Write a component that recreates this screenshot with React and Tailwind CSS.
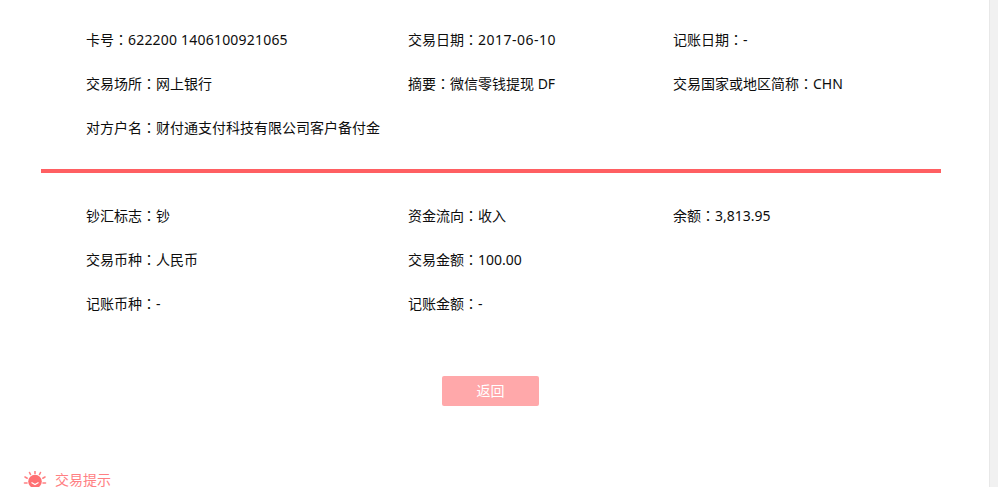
import React from "react";

const topRows = [
  [["卡号", "622200 1406100921065", "tracking-[0.2px]"], ["交易日期", "2017-06-10", "tracking-[0.5px]"], ["记账日期", "-"]],
  [["交易场所", "网上银行"], ["摘要", "微信零钱提现 DF"], ["交易国家或地区简称", "CHN"]],
  [["对方户名", "财付通支付科技有限公司客户备付金"]],
];

const bottomRows = [
  [["钞汇标志", "钞"], ["资金流向", "收入"], ["余额", "3,813.95"]],
  [["交易币种", "人民币"], ["交易金额", "100.00"]],
  [["记账币种", "-"], ["记账金额", "-"]],
];

function Field({ label, value, valueClass }) {
  return (
    <div className="whitespace-nowrap">
      {label}
      <span className="font-['Noto_Sans_CJK_TC']">：</span>
      <span className={valueClass}>{value}</span>
    </div>
  );
}

function InfoBlock({ rows }) {
  return (
    <div className="pl-[86px]">
      {rows.map((row, i) => (
        <div key={i} className="grid h-[44px] grid-cols-[322px_265px_1fr] items-center">
          {row.map(([label, value, valueClass]) => (
            <Field key={label} label={label} value={value} valueClass={valueClass} />
          ))}
        </div>
      ))}
    </div>
  );
}

function SunIcon() {
  return (
    <svg width="24" height="20" viewBox="0 0 24 20" className="shrink-0">
      <g stroke="#ff8083" strokeWidth="1.6" strokeLinecap="round">
        <path d="M12 .5v2" />
        <path d="M6.5 1.5l1 2" />
        <path d="M17.5 1.5l-1 2" />
        <path d="M2 6l2.2 1.2" />
        <path d="M22 6l-2.2 1.2" />
        <path d="M1.5 12h2.5" />
        <path d="M20 12h2.5" />
      </g>
      <circle cx="12" cy="10.5" r="6.8" fill="#ff7073" />
      <path d="M8.5 11.5l3.5 2 3.5-2" fill="none" stroke="#fff" strokeWidth="1.2" />
    </svg>
  );
}

export default function App() {
  return (
    <div className="flex h-[487px] w-full overflow-hidden bg-white font-['Noto_Sans','Noto_Sans_CJK_SC',sans-serif] text-sm text-[#0d0d0d]">
      <div className="min-w-0 flex-1">
        <div className="pt-[17px]">
          <InfoBlock rows={topRows} />
        </div>

        <div className="mt-[20px] ml-[41px] h-[4px] w-[900px] bg-[#ff5f62]" />

        <div className="pt-[20px]">
          <InfoBlock rows={bottomRows} />
        </div>

        <div className="mt-[51px] ml-[442px]">
          <button className="h-[30px] w-[97px] rounded-[2px] bg-[#ffa8aa] text-sm text-white">返回</button>
        </div>

        <div className="mt-[65px] ml-[23px] flex items-start gap-[8px] text-sm text-[#ff8083]">
          <SunIcon />
          <span className="leading-[18px]">交易提示</span>
        </div>
      </div>
      <div className="w-[9px] shrink-0 border-l border-[#e8e8e8] bg-[#f1f1f1]" />
    </div>
  );
}
